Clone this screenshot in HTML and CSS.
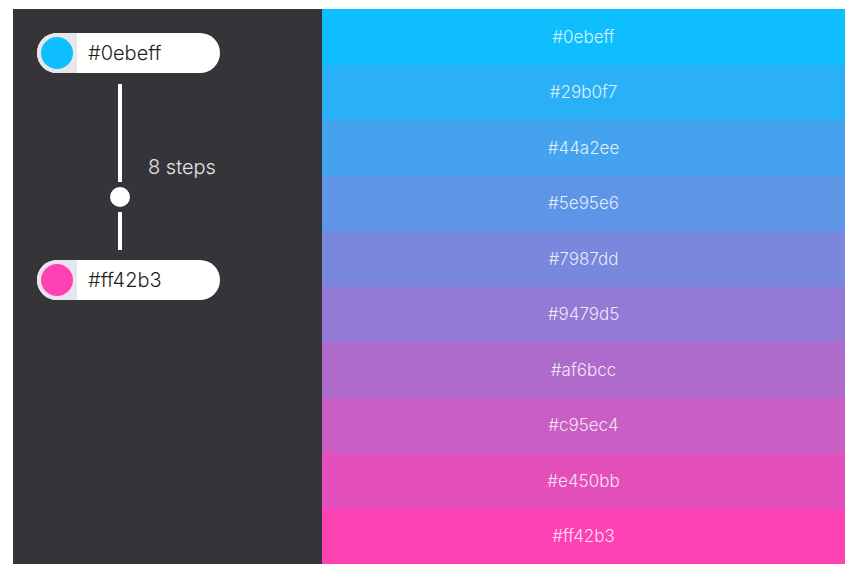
FILE: index.html
```html
<!DOCTYPE html>
<html lang="en">
<head>
<meta charset="utf-8">
<title>Color steps</title>
<link rel="stylesheet" href="styles.css">
</head>
<body>
<main class="app">
  <section class="controls">
    <div class="pill">
      <span class="swatch-wrap"><span class="swatch" style="background:#0ebeff"></span></span>
      <span class="pill-text">#0ebeff</span>
    </div>
    <div class="range">
      <div class="track">
        <span class="line line-top"></span>
        <span class="knob"></span>
        <span class="line line-bottom"></span>
      </div>
      <span class="steps">8 steps</span>
    </div>
    <div class="pill">
      <span class="swatch-wrap"><span class="swatch" style="background:#ff42b3"></span></span>
      <span class="pill-text">#ff42b3</span>
    </div>
  </section>
  <section class="palette">
    <div class="row" style="background:#0ebeff">#0ebeff</div>
    <div class="row" style="background:#29b0f7">#29b0f7</div>
    <div class="row" style="background:#44a2ee">#44a2ee</div>
    <div class="row" style="background:#5e95e6">#5e95e6</div>
    <div class="row" style="background:#7987dd">#7987dd</div>
    <div class="row" style="background:#9479d5">#9479d5</div>
    <div class="row" style="background:#af6bcc">#af6bcc</div>
    <div class="row" style="background:#c95ec4">#c95ec4</div>
    <div class="row" style="background:#e450bb">#e450bb</div>
    <div class="row" style="background:#ff42b3">#ff42b3</div>
  </section>
</main>
</body>
</html>
```

FILE: styles.css
```css
html, body {
  margin: 0;
  background: #ffffff;
}

body {
  padding: 9px 10px 8px 13px;
  font-family: "Inter", "Liberation Sans", sans-serif;
  font-weight: 300;
}

.app {
  display: flex;
  width: 832px;
  height: 555px;
  background: #353438;
}

.controls {
  width: 309px;
  box-sizing: border-box;
  padding: 24px;
  display: flex;
  flex-direction: column;
}

.pill {
  display: flex;
  width: 183px;
  height: 40px;
  border-radius: 20px;
  background: #ffffff;
  overflow: hidden;
}

.swatch-wrap {
  width: 40px;
  height: 40px;
  background: #e7e7eb;
  display: flex;
  align-items: center;
  justify-content: center;
}

.swatch {
  width: 32px;
  height: 32px;
  border-radius: 50%;
}

.pill-text {
  padding-left: 11px;
  line-height: 40px;
  font-size: 20px;
  color: #1f1f22;
}

.range {
  display: flex;
  align-items: center;
  height: 166px;
  margin: 11px 0 10px 68px;
}

.track {
  width: 30px;
  height: 166px;
  display: flex;
  flex-direction: column;
  align-items: center;
}

.line {
  width: 4px;
  background: #ffffff;
}

.line-top {
  height: 98px;
}

.line-bottom {
  height: 38px;
}

.knob {
  width: 20px;
  height: 20px;
  margin: 5px 0;
  border-radius: 50%;
  background: #ffffff;
}

.steps {
  margin-left: 13px;
  font-size: 20px;
  color: #e4e4e6;
}

.palette {
  flex: 1;
  display: flex;
  flex-direction: column;
}

.row {
  flex: 1;
  display: flex;
  align-items: center;
  justify-content: center;
  font-size: 17px;
  color: rgba(255, 255, 255, 0.85);
}
```
